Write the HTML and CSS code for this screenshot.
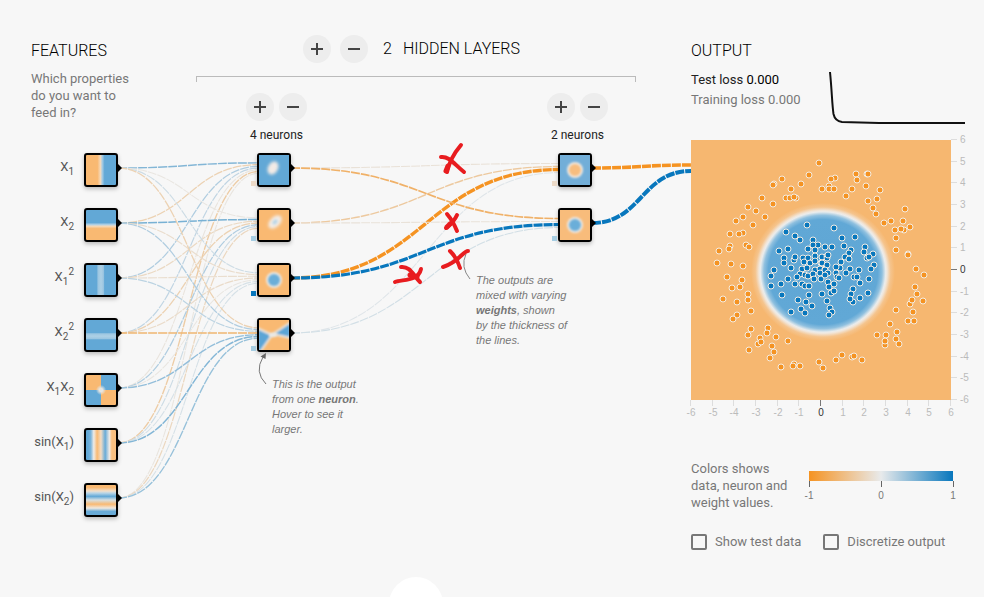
FILE: index.html
```html
<!DOCTYPE html>
<html lang="en">
<head>
<meta charset="utf-8">
<meta name="viewport" content="width=device-width, initial-scale=1">
<title>Neural network playground</title>
<link rel="stylesheet" href="styles.css">
</head>
<body>
<div class="page">
<main class="main">
  <svg class="links" id="links" aria-hidden="true"></svg>

  <section class="features">
    <h2 class="heading">Features</h2>
    <p class="hint">Which properties<br>do you want to<br>feed in?</p>
    <ul class="feature-list">
      <li class="feature"><span class="feature-label">X<sub>1</sub></span><div class="node fill-x1" data-layer="0"></div></li>
      <li class="feature"><span class="feature-label">X<sub>2</sub></span><div class="node fill-x2" data-layer="0"></div></li>
      <li class="feature"><span class="feature-label">X<sub>1</sub><sup>2</sup></span><div class="node fill-x1sq" data-layer="0"></div></li>
      <li class="feature"><span class="feature-label">X<sub>2</sub><sup>2</sup></span><div class="node fill-x2sq" data-layer="0"></div></li>
      <li class="feature"><span class="feature-label">X<sub>1</sub>X<sub>2</sub></span><div class="node fill-x1x2" data-layer="0"></div></li>
      <li class="feature"><span class="feature-label">sin(X<sub>1</sub>)</span><div class="node fill-sin1" data-layer="0"></div></li>
      <li class="feature"><span class="feature-label">sin(X<sub>2</sub>)</span><div class="node fill-sin2" data-layer="0"></div></li>
    </ul>
  </section>

  <section class="hidden-layers">
    <div class="layers-header">
      <button class="round plus" type="button" aria-label="Add layer"></button>
      <button class="round" type="button" aria-label="Remove layer"></button>
      <h2 class="heading layers-title"><span>2</span><span>Hidden layers</span></h2>
    </div>
    <div class="bracket"></div>
    <div class="columns">
      <div class="column">
        <div class="column-buttons">
          <button class="round plus" type="button" aria-label="Add neuron"></button>
          <button class="round" type="button" aria-label="Remove neuron"></button>
        </div>
        <div class="neuron-count">4 neurons</div>
        <div class="neurons">
          <div class="node" data-layer="1">
            <svg viewBox="0 0 30 30"><rect width="30" height="30" fill="#62a8d6"/><ellipse cx="14" cy="13" rx="5" ry="7" transform="rotate(28 14 13)" fill="#f3ebe6" filter="url(#soft)"/></svg>
            <span class="bias bias-orange"></span>
          </div>
          <div class="node" data-layer="1">
            <svg viewBox="0 0 30 30"><rect width="30" height="30" fill="#f9b972"/><ellipse cx="16" cy="12" rx="5" ry="8" transform="rotate(45 16 12)" fill="#f3ece6" filter="url(#soft)"/><ellipse cx="16" cy="12" rx="2" ry="3" transform="rotate(45 16 12)" fill="#b9d6e8" filter="url(#fine)"/></svg>
            <span class="bias bias-light"></span>
          </div>
          <div class="node" data-layer="1">
            <svg viewBox="0 0 30 30"><rect width="30" height="30" fill="#f9b972"/><circle cx="15" cy="15" r="8" fill="#efe9e3" filter="url(#fine)"/><circle cx="15" cy="15" r="6" fill="#6aaed9" filter="url(#fine)"/></svg>
            <span class="bias bias-blue"></span>
          </div>
          <div class="node" data-layer="1">
            <svg viewBox="0 0 30 30"><rect width="30" height="30" fill="#f9b972"/><g fill="#5ba5d6" stroke="#ece6df" stroke-width="2" filter="url(#fine)"><path d="M-2 8 L13 15 L1 32 L-2 32Z"/><path d="M32 2 L14 14 L32 18Z"/></g><ellipse cx="14" cy="15" rx="4" ry="2" fill="#e9e9e6" filter="url(#fine)"/></svg>
            <span class="bias bias-light"></span>
          </div>
        </div>
      </div>
      <div class="column">
        <div class="column-buttons">
          <button class="round plus" type="button" aria-label="Add neuron"></button>
          <button class="round" type="button" aria-label="Remove neuron"></button>
        </div>
        <div class="neuron-count">2 neurons</div>
        <div class="neurons">
          <div class="node" data-layer="2">
            <svg viewBox="0 0 30 30"><rect width="30" height="30" fill="#72aed8"/><circle cx="15" cy="15" r="8" fill="#efe9e3" filter="url(#fine)"/><circle cx="15" cy="15" r="6" fill="#f7bd7f" filter="url(#fine)"/></svg>
            <span class="bias bias-orange"></span>
          </div>
          <div class="node" data-layer="2">
            <svg viewBox="0 0 30 30"><rect width="30" height="30" fill="#f8bc7b"/><circle cx="15" cy="15" r="8" fill="#efe9e3" filter="url(#fine)"/><circle cx="15" cy="15" r="6" fill="#6aaed9" filter="url(#fine)"/></svg>
            <span class="bias bias-light"></span>
          </div>
        </div>
      </div>
    </div>

    <div class="callout callout-neuron">
      <svg class="arrow-neuron" viewBox="0 0 12 34" aria-hidden="true"><path d="M9 32 Q-3 20 6 5" fill="none" stroke="#777" stroke-width="1"/><path d="M9 1 L8.500 7 L3.500 4.500Z" fill="#666"/></svg>
      This is the output<br>from one <b>neuron</b>.<br>Hover to see it<br>larger.
    </div>
    <div class="callout callout-weights">
      <svg class="arrow-weights" viewBox="0 0 12 30" aria-hidden="true"><path d="M8 28 Q-2 16 4 3" fill="none" stroke="#888" stroke-width="1"/></svg>
      The outputs are<br>mixed with varying<br><b>weights</b>, shown<br>by the thickness of<br>the lines.
    </div>
    <svg class="marks" viewBox="390 140 84 150" aria-hidden="true">
      <path d="M461 145 Q450 158 447 172"/><path class="blot" d="M448 166 L446 171"/>
      <path d="M441 157 C449 156 454 164 464 172"/>
      <path d="M457 215 Q454 222 446 228"/><path class="blot" d="M450 224 L447 227"/>
      <path d="M447 214 Q453 221 457 231"/>
      <path d="M468 251 C463 251 459 262 443 267"/>
      <path d="M450 251 Q457 258 460 268"/>
      <path d="M401 267 C410 266 413 275 420 282"/>
      <path d="M395 282 C402 279 418 282 421 269"/><path class="blot" d="M410 275 L417 277"/>
    </svg>
  </section>

  <section class="output">
    <h2 class="heading">Output</h2>
    <div class="stats">
      <div class="losses">
        <div>Test loss <span class="loss-value">0.000</span></div>
        <div class="training">Training loss 0.000</div>
      </div>
      <svg class="loss-chart" viewBox="0 0 136 54" role="img" aria-label="Loss over time"><path d="M1 2 C3 22 3 34 4.500 44 Q6 51 13 52 L50 53 L136 53" fill="none" stroke="#111" stroke-width="2"/></svg>
    </div>
    <svg class="heatmap" id="heatmap" viewBox="0 0 274 280" role="img" aria-label="Output for each point">
      <defs>
        <radialGradient id="disc" gradientUnits="userSpaceOnUse" cx="0" cy="0" r="72">
          <stop offset="0" stop-color="#5fa6d4"/><stop offset=".76" stop-color="#61a8d6"/>
          <stop offset=".82" stop-color="#8fc0df"/><stop offset=".87" stop-color="#eaecec"/>
          <stop offset=".89" stop-color="#f1e6da"/><stop offset=".94" stop-color="#f5c48d"/><stop offset="1" stop-color="#f6b770"/>
        </radialGradient>
        <filter id="soft" x="-50%" y="-50%" width="200%" height="200%"><feGaussianBlur stdDeviation="1.700"/></filter>
        <filter id="fine" x="-50%" y="-50%" width="200%" height="200%"><feGaussianBlur stdDeviation="1"/></filter>
      </defs>
      <rect width="260" height="260" fill="#f6b770"/>
      <g transform="translate(132 132) scale(1 .96)"><circle r="72" fill="url(#disc)"/></g>
    </svg>
    <div class="legend">
      <p class="hint">Colors shows<br>data, neuron and<br>weight values.</p>
      <div class="scale">
        <div class="scale-bar"></div>
        <div class="scale-ticks"><span>-1</span><span>0</span><span>1</span></div>
      </div>
    </div>
    <div class="options">
      <label class="option"><input type="checkbox">Show test data</label>
      <label class="option"><input type="checkbox">Discretize output</label>
    </div>
  </section>
</main>
<footer class="footer"><div class="scroll-hint"></div></footer>
</div>
<script src="script.js"></script>
</body>
</html>
```
FILE: styles.css
```css
* { box-sizing: border-box; }

body {
  margin: 0;
  background: #f7f7f7;
  color: #222;
  font: 13px/17px Roboto, "Liberation Sans", sans-serif;
}

.page {
  display: flex;
  flex-direction: column;
  height: 100vh;
  overflow: hidden;
}

.main {
  position: relative;
  display: flex;
  flex: none;
  padding: 0 19px 0 31px;
}

.links {
  position: absolute;
  top: 0;
  left: 0;
  width: 100%;
  height: 100%;
  fill: none;
}

.heading {
  margin: 0;
  color: #000;
  font-size: 16px;
  font-weight: 300;
  line-height: 20px;
  text-transform: uppercase;
}

.hint { margin: 0; color: #777; }

/* Features */
.features { width: 165px; padding-top: 41px; }
.features .hint { margin-top: 9px; }

.feature-list {
  display: grid;
  gap: 21px;
  margin: 32px 0 0;
  padding: 0;
  list-style: none;
}

.feature { display: flex; gap: 10px; }

.feature-label {
  width: 43px;
  color: #555;
  font-size: 13px;
  line-height: 28px;
  text-align: right;
  white-space: nowrap;
}

.feature-label sub,
.feature-label sup { font-size: 10px; line-height: 0; }
.feature-label sub { vertical-align: -4px; }
.feature-label sup { vertical-align: 6px; }

.node {
  position: relative;
  width: 34px;
  height: 34px;
  border: 2px solid #000;
  border-radius: 3px;
  box-shadow: 0 2px 4px rgba(0, 0, 0, .25);
}

.node svg { display: block; width: 30px; height: 30px; overflow: hidden; }

.node::after {
  content: "";
  position: absolute;
  top: 9px;
  right: -6px;
  border: 4px solid transparent;
  border-left-color: #000;
  border-right-width: 0;
}

.fill-x1 { background: linear-gradient(to right, #f9b972 38%, #f5d9ba 48%, #a9cde4 54%, #62a8d6 62%); }
.fill-x2 { background: linear-gradient(to bottom, #62a8d6 42%, #b4d2e5 49%, #f5dabb 54%, #f9b972 62%); }
.fill-x1sq { background: linear-gradient(to right, #62a8d6 36%, #9cc6e1 40%, #add0e5 50%, #9cc6e1 58%, #62a8d6 62%); }
.fill-x2sq { background: linear-gradient(to bottom, #62a8d6 42%, #9cc6e1 46%, #add0e5 54%, #9cc6e1 62%, #62a8d6 66%); }
.fill-x1x2 {
  background:
    radial-gradient(circle, #e5e5e2 8%, #e5e5e200 24%),
    conic-gradient(#62a8d6 25%, #f9b972 0 50%, #62a8d6 0 75%, #f9b972 0);
}
.fill-sin1 { background: linear-gradient(to right, #62a8d6 6%, #7bb4db 16%, #f0ebe6 26%, #f9b972 37%, #f2dcc4 50%, #68abd7 64%, #eeeae6 78%, #f8bf80 86%); }
.fill-sin2 { background: linear-gradient(to bottom, #f9b972 8%, #f2dfca 20%, #b8d5e7 27%, #62a8d6 38%, #d6dfe2 50%, #f9b972 64%, #efe8e0 77%, #69abd7 88%); }

.bias { position: absolute; top: 26px; left: -8px; width: 5px; height: 5px; }
.bias-orange { background: #ecdac8; }
.bias-light { background: #a6cde2; }
.bias-blue { background: #0877bd; }

/* Hidden layers */
.hidden-layers { position: relative; flex: 1; padding-top: 35px; }

.layers-header {
  display: flex;
  justify-content: center;
  align-items: center;
  gap: 9px;
  padding-right: 9px;
}

.layers-title { display: flex; gap: 11px; margin-left: 6px; }

.round {
  position: relative;
  width: 28px;
  height: 28px;
  padding: 0;
  border: 0;
  border-radius: 50%;
  background: #ededed;
}

.round::before,
.plus::after {
  content: "";
  position: absolute;
  top: 13px;
  left: 8px;
  width: 12px;
  height: 2px;
  background: #444;
}

.plus::after { transform: rotate(90deg); }

.bracket {
  height: 6px;
  margin-top: 13px;
  border: solid #bbb;
  border-width: 1px 1px 0;
}

.columns {
  display: flex;
  justify-content: space-between;
  padding: 11px 28px 0 50px;
}

.column { width: 61px; }
.column-buttons { display: flex; gap: 5px; }

.neuron-count {
  margin: 6px 0 10px;
  font-size: 12px;
  line-height: 16px;
  text-align: center;
}

.neurons { display: grid; gap: 21px; padding-left: 11px; }

.callout {
  position: absolute;
  color: #777;
  font-family: "Liberation Sans", sans-serif;
  font-size: 11px;
  font-style: italic;
  line-height: 15px;
  white-space: nowrap;
}

.callout-neuron { top: 377px; left: 76px; }
.callout-weights { top: 273px; left: 280px; }
.callout svg { position: absolute; }
.arrow-neuron { top: -25px; left: -15px; width: 12px; height: 34px; }
.arrow-weights { top: -22px; left: -14px; width: 12px; height: 30px; }

.marks {
  position: absolute;
  top: 140px;
  left: 194px;
  width: 84px;
  height: 150px;
  fill: none;
  stroke: #e81c1f;
  stroke-width: 4px;
  stroke-linecap: round;
}

.marks .blot { stroke-width: 5px; }

/* Output */
.output {
  position: relative;
  width: 274px;
  margin-left: 55px;
  padding-top: 41px;
}

.stats { display: flex; justify-content: space-between; margin-top: 9px; }
.losses { line-height: 20px; }
.loss-value { color: #000; }
.training { color: #777; }
.loss-chart { width: 136px; height: 54px; }

.heatmap { display: block; width: 100%; margin-top: 16px; overflow: visible; }
.heatmap circle.dot { stroke: #f3ece2; stroke-width: 1px; }
.tick { stroke: #ddd; }
.tick-zero { stroke: #777; }
.tick-label { fill: #bbb; font-family: "Liberation Sans", sans-serif; font-size: 10px; }
.tick-label-zero { fill: #333; }

.legend { display: flex; justify-content: space-between; margin-top: 40px; }
.scale { width: 144px; margin: 11px 12px 0 0; }

.scale-bar {
  height: 10px;
  background: linear-gradient(to right, #f59322, #e8eaeb, #0877bd);
}

.scale-ticks {
  display: flex;
  justify-content: space-between;
  margin: 0 -8px;
  color: #777;
  font-family: "Liberation Sans", sans-serif;
  font-size: 10px;
  line-height: 18px;
}

.scale-ticks span { width: 16px; text-align: center; }

.scale-ticks span::before {
  content: "";
  display: block;
  width: 1px;
  height: 6px;
  margin: 0 auto;
  background: #666;
}

.options { display: flex; gap: 22px; margin-top: 22px; }

.option {
  display: flex;
  align-items: center;
  gap: 8px;
  color: #777;
  line-height: 18px;
  white-space: nowrap;
}

.option input {
  appearance: none;
  width: 16px;
  height: 16px;
  margin: 0;
  border: 2px solid #777;
  border-radius: 2px;
}

/* Footer */
.footer { flex: none; padding: 26px 152px 0 0; }

.scroll-hint {
  width: 54px;
  height: 54px;
  margin: 0 auto;
  border-radius: 50%;
  background: #fff;
}
```
FILE: script.js
```js
const SVG = "http://www.w3.org/2000/svg";

function add(parent, name, attrs, text) {
  const el = document.createElementNS(SVG, name);
  for (const key in attrs) el.setAttribute(key, attrs[key]);
  if (text !== undefined) el.textContent = text;
  parent.appendChild(el);
  return el;
}

// weights[layer][target][source]; negative is orange, positive is blue
const weights = [
  [
    [0.45, -0.28, 0.25, 0.18, -0.07, -0.35, -0.06],
    [-0.05, 0.5, -0.2, -0.28, 0.25, 0.12, -0.22],
    [0.12, -0.15, -0.14, -0.17, -0.05, 0.08, 0.08],
    [-0.28, 0.25, 0.2, -0.6, 0.38, 0.45, 0.36]
  ],
  [
    [-0.1, -0.38, -2.4, 0.04],
    [-0.65, -0.09, 2.2, 0.1]
  ],
  [[-2.6, 3.2]]
];

function colour(w) {
  const t = Math.min(1, Math.abs(w));
  const end = w < 0 ? [245, 147, 34] : [8, 119, 189];
  return "rgb(" + [232, 234, 235].map((c, i) => Math.round(c + (end[i] - c) * t)) + ")";
}

function drawLinks() {
  const svg = document.getElementById("links");
  svg.replaceChildren();
  const origin = svg.getBoundingClientRect();
  const layers = [0, 1, 2].map(n => [...document.querySelectorAll(`[data-layer="${n}"]`)].map(el => {
    const r = el.getBoundingClientRect();
    return { left: r.left - origin.left + 2, right: r.right - origin.left, y: r.top - origin.top + 15 };
  }));
  const map = document.getElementById("heatmap").getBoundingClientRect();
  layers.push([{ left: map.left - origin.left, y: layers[0][0].y }]);

  weights.forEach((targets, n) => targets.forEach((row, j) => row.forEach((w, i) => {
    const from = layers[n][i], to = layers[n + 1][j];
    const y = to.y + (i - (row.length - 1) / 2) / row.length * 12;
    const mid = (from.right + to.left) / 2;
    add(svg, "path", {
      d: `M${from.right} ${from.y}C${mid} ${from.y} ${mid} ${y} ${to.left} ${y}`,
      stroke: colour(w),
      "stroke-width": Math.min(4, 1 + Math.abs(w)),
      "stroke-dasharray": "9 1"
    });
  })));
}

const orange = "128,23 118,35 91,39 83,44 82,45 110,44 100,49 131,49 138,46 71,58 95,58 99,58 105,58 103,57 82,64 57,67 65,71 74,77 52,77 45,81 62,85 39,94 52,93 48,94 55,105 58,107 39,106 38,109 28,111 26,123 40,124 52,126 36,137 51,140 41,148 49,147 165,34 176,34 177,34 166,40 144,38 140,39 138,49 143,49 161,49 175,46 189,50 155,56 177,61 186,59 182,68 185,74 214,69 200,81 193,83 212,81 219,87 213,90 210,89 204,90 205,98 205,110 217,114 217,115 225,129 233,135 224,147 32,159 46,162 57,154 57,160 60,171 46,175 42,179 60,189 57,195 77,188 76,193 85,197 69,198 67,204 70,202 97,201 81,206 83,212 58,210 79,218 90,227 103,224 102,226 109,226 128,222 132,228 145,220 151,215 161,217 163,216 171,220 186,195 195,195 194,205 194,201 205,199 206,192 208,204 199,184 205,170 217,181 223,181 222,172 219,164 221,160 226,154 232,161";
const blue = "116,85 95,92 104,96 109,100 122,100 127,105 122,105 134,107 117,109 124,110 97,109 88,111 93,118 103,120 104,117 112,118 117,118 124,116 131,117 136,116 93,123 113,122 119,123 130,123 124,121 100,128 111,129 116,128 124,130 129,129 134,129 83,130 80,136 109,134 114,135 117,136 122,134 129,133 106,137 97,139 123,139 130,139 80,146 90,144 104,144 111,144 114,146 118,146 143,88 151,98 164,97 141,107 153,106 160,110 158,113 154,117 158,119 174,107 173,112 182,114 176,118 178,117 183,125 180,129 150,122 149,128 145,127 159,129 168,130 155,133 145,133 146,137 148,138 163,137 166,137 178,139 169,143 137,142 143,144 138,147 162,149 136,118 137,115 131,123 136,125 134,130 137,133 134,135 91,155 118,155 107,160 115,162 121,166 110,169 100,172 114,173 131,154 136,161 140,153 143,151 139,168 141,172 138,175 160,154 162,162 159,159 169,158 177,153";

function drawPoints(svg, points, fill) {
  points.split(" ").forEach(p => {
    const [cx, cy] = p.split(",");
    add(svg, "circle", { class: "dot", cx, cy, r: 3, fill });
  });
}

function drawAxes(svg) {
  for (let v = -6; v <= 6; v++) {
    const at = Math.round((v + 6) * 260 / 12);
    const down = 260 - at;
    const zero = v === 0;
    const tick = zero ? "tick tick-zero" : "tick";
    const label = zero ? "tick-label tick-label-zero" : "tick-label";
    add(svg, "path", { class: tick, d: `M${at - 0.5} 260v6` });
    add(svg, "path", { class: tick, d: `M260 ${down - 0.5}h6` });
    add(svg, "text", { class: label, x: at, y: 276, "text-anchor": "middle" }, v);
    add(svg, "text", { class: label, x: 269, y: down + 3 }, v);
  }
}

const heatmap = document.getElementById("heatmap");
drawPoints(heatmap, orange, "#f59322");
drawPoints(heatmap, blue, "#0877bd");
drawAxes(heatmap);
drawLinks();
window.addEventListener("resize", drawLinks);
```
